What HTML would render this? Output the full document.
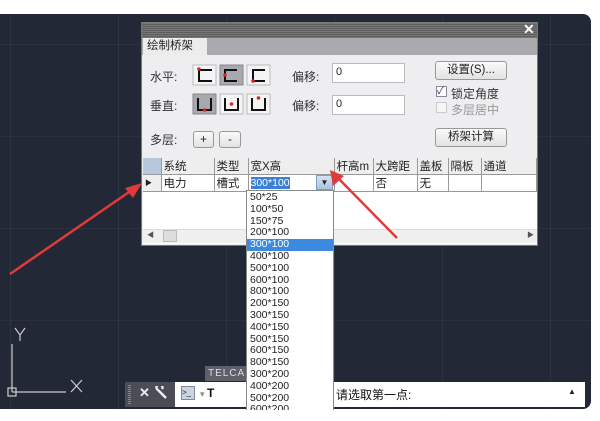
<!DOCTYPE html>
<html><head><meta charset="utf-8"><style>
*{margin:0;padding:0;box-sizing:border-box}
body{width:600px;height:421px;background:#fff;position:relative;overflow:hidden;font-family:"Liberation Sans","Noto Sans CJK SC",sans-serif;font-size:11px;color:#222}
.a{position:absolute}
#cad{left:0;top:14px;width:591px;height:395px;background:#222835;border-radius:0 8px 8px 0;overflow:hidden;
background-image:linear-gradient(90deg,rgba(255,255,255,.05) 1px,transparent 1px),linear-gradient(rgba(255,255,255,.04) 1px,transparent 1px);background-size:108px 100%,100% 92px;background-position:10px 0,0 30px}
.lbl{font-size:12px;color:#333}
.btn{border:1px solid #999;border-radius:3px;background:linear-gradient(#fafafa,#e2e2e2);font-size:11.5px;text-align:center;line-height:17px}
.inp{background:#fff;border:1px solid #bbb;font-size:11px;padding-left:3px;line-height:16px}
th,td{border-right:1px solid #999;font-weight:normal;text-align:left;padding-left:2px;font-size:11.5px;white-space:nowrap;overflow:hidden}
.dd div{height:11.8px;line-height:11.8px;font-size:10.5px;padding-left:3px;color:#222}
</style></head><body>
<div id="cad" class="a"></div>
<svg class="a" style="left:0;top:0" width="600" height="421">
<g stroke="#ccc" stroke-width="1.2" fill="none">
<line x1="12" y1="344" x2="12" y2="392"/><line x1="12" y1="392" x2="66" y2="392"/>
<rect x="8" y="388" width="8" height="8"/>
<path d="M15 328 L20 335 L25 328 M20 335 L20 341"/>
<path d="M71 380 L82 392 M82 380 L71 392"/>
</g>
</svg>
<!-- dialog -->
<div class="a" style="left:141px;top:22px;width:397px;height:224px;background:#eeedf0;border:1px solid #777">
 <div class="a" style="left:0;top:0;width:395px;height:15px;background:repeating-linear-gradient(#777 0 1px,#5e5e5e 1px 2px)"></div>
 <div class="a" style="left:381px;top:-2px;color:#fff;font-size:14px;font-weight:bold">✕</div>
 <div class="a" style="left:0;top:15px;width:395px;height:17px;background:#a9a9ae"></div>
 <div class="a" style="left:1px;top:15px;width:64px;height:17px;background:#ececec;font-size:11.5px;line-height:17px;padding-left:4px">绘制桥架</div>
</div>
<div class="a lbl" style="left:150px;top:68px">水平:</div>
<div class="a lbl" style="left:150px;top:97px">垂直:</div>
<div class="a lbl" style="left:150px;top:131px">多层:</div>
<svg class="a" style="left:192px;top:64px" width="80" height="52">
<rect x="1" y="1" width="23" height="20" fill="#f4f4f4" stroke="#bbb"/>
<rect x="28" y="1" width="23" height="20" fill="#a8a8ae" stroke="#888"/>
<rect x="55" y="1" width="23" height="20" fill="#f4f4f4" stroke="#bbb"/>
<path d="M20 6H7V17H20M45 6H33V17H45M73 6H61V17H73" stroke="#111" stroke-width="2" fill="none"/>
<circle cx="7" cy="5" r="1.8" fill="#d22"/><circle cx="33" cy="11" r="1.8" fill="#d22"/><circle cx="61" cy="17" r="1.8" fill="#d22"/>
<rect x="1" y="30" width="23" height="20" fill="#a8a8ae" stroke="#888"/>
<rect x="28" y="30" width="23" height="20" fill="#f4f4f4" stroke="#bbb"/>
<rect x="55" y="30" width="23" height="20" fill="#f4f4f4" stroke="#bbb"/>
<path d="M6 34V46H19V34M33 34V46H46V34M60 34V46H73V34" stroke="#111" stroke-width="2" fill="none"/>
<circle cx="12.5" cy="46" r="1.8" fill="#d22"/><circle cx="39.5" cy="40" r="1.8" fill="#d22"/><circle cx="66.5" cy="34" r="1.8" fill="#d22"/>
</svg>
<div class="a btn" style="left:193px;top:131px;width:21px;height:17px">+</div>
<div class="a btn" style="left:219px;top:131px;width:22px;height:17px">-</div>
<div class="a lbl" style="left:292px;top:68px">偏移:</div>
<div class="a lbl" style="left:292px;top:97px">偏移:</div>
<div class="a inp" style="left:332px;top:63px;width:73px;height:20px">0</div>
<div class="a inp" style="left:332px;top:95px;width:73px;height:20px">0</div>
<div class="a btn" style="left:435px;top:61px;width:72px;height:19px">设置(S)...</div>
<div class="a" style="left:436px;top:86px;width:11px;height:11px;border:1px solid #889;background:#fff;font-size:10px;line-height:9px;color:#236">✓</div>
<div class="a lbl" style="left:451px;top:85px">锁定角度</div>
<div class="a" style="left:436px;top:102px;width:11px;height:11px;border:1px solid #ccc;background:#f6f6f6"></div>
<div class="a lbl" style="left:451px;top:101px;color:#999">多层居中</div>
<div class="a btn" style="left:435px;top:128px;width:72px;height:19px">桥架计算</div>
<!-- table -->
<div class="a" style="left:143px;top:158px;width:394px;height:86px;background:#fff;border-top:1px solid #999"></div>
<table class="a" style="left:143px;top:158px;border-collapse:collapse;table-layout:fixed;width:394px">
<tr style="height:15px;background:#eee;border-bottom:1px solid #999"><th style="width:18px;background:#b8c8dc"></th><th style="width:53px">系统</th><th style="width:34px">类型</th><th style="width:86px">宽X高</th><th style="width:39px">杆高m</th><th style="width:44px">大跨距</th><th style="width:31px">盖板</th><th style="width:33px">隔板</th><th>通道</th></tr>
<tr style="height:16px;border-bottom:1px solid #999"><td style="font-size:7px;background:#eee">▶</td><td>电力</td><td>槽式</td><td style="padding:0"><span style="background:#3b7fd8;color:#fff;font-size:10.5px;margin-left:2px">300*100</span></td><td></td><td>否</td><td>无</td><td></td><td></td></tr>
</table>
<div class="a" style="left:316px;top:175px;width:17px;height:15px;background:linear-gradient(#d4e2f2,#a9c2e0);border:1px solid #7f9fc8;font-size:8px;text-align:center;line-height:13px">▼</div>
<div class="a" style="left:143px;top:229px;width:394px;height:14px;background:#efefef;border-top:1px solid #ddd"></div>
<div class="a" style="left:163px;top:230px;width:14px;height:12px;background:#ddd;border:1px solid #bbb"></div>
<div class="a" style="left:147px;top:230px;font-size:7px;color:#555">◀</div>
<div class="a" style="left:527px;top:230px;font-size:7px;color:#555">▶</div>
<!-- command bar -->
<div class="a" style="left:205px;top:366px;width:42px;height:15px;background:#5d6068;color:#dde;font-size:10px;line-height:15px;padding-left:3px;letter-spacing:1px">TELCAD</div>
<div class="a" style="left:125px;top:382px;width:460px;height:25px;background:#fff"></div>
<div class="a" style="left:125px;top:382px;width:50px;height:25px;background:#4a4d55"></div>
<div class="a" style="left:128px;top:385px;width:3px;height:19px;background:repeating-linear-gradient(#888 0 1px,#4a4d55 1px 2px)"></div>
<div class="a" style="left:139px;top:385px;color:#eee;font-size:13px;font-weight:bold">✕</div>
<svg class="a" style="left:155px;top:386px" width="16" height="16"><path d="M3 4 L11 12 M3 4 a3 3 0 1 1 4 -1" stroke="#eee" stroke-width="2.4" fill="none"/></svg>
<div class="a" style="left:181px;top:386px;width:14px;height:14px;background:#c8d4e4;border:1px solid #889;font-size:8px;line-height:12px">&gt;_</div>
<div class="a" style="left:200px;top:386px;font-size:9px;color:#888">▾ <b style="color:#111;font-size:12px">T</b></div>
<div class="a" style="left:336px;top:386px;font-size:12px;color:#111">请选取第一点:</div>
<div class="a" style="left:568px;top:387px;font-size:8px">▲</div>
<!-- dropdown -->
<div class="a dd" style="left:246px;top:190px;width:88px;height:220px;background:#fff;border:1px solid #888;border-bottom:none;overflow:hidden;padding-top:1px">
<div>50*25</div><div>100*50</div><div>150*75</div><div>200*100</div><div style="background:#3b8ae0;color:#fff">300*100</div><div>400*100</div><div>500*100</div><div>600*100</div><div>800*100</div><div>200*150</div><div>300*150</div><div>400*150</div><div>500*150</div><div>600*150</div><div>800*150</div><div>300*200</div><div>400*200</div><div>500*200</div><div>600*200</div>
</div>
<!-- arrows on top -->
<svg class="a" style="left:0;top:0" width="600" height="421">
<line x1="10" y1="274" x2="132" y2="190" stroke="#e03a3a" stroke-width="2.5"/>
<polygon points="142,183 125,188 133,198" fill="#e03a3a"/>
<line x1="397" y1="238" x2="338" y2="178" stroke="#e03a3a" stroke-width="2.5"/>
<polygon points="330,170 333,186 344,176" fill="#e03a3a"/>
</svg>
</body></html>
